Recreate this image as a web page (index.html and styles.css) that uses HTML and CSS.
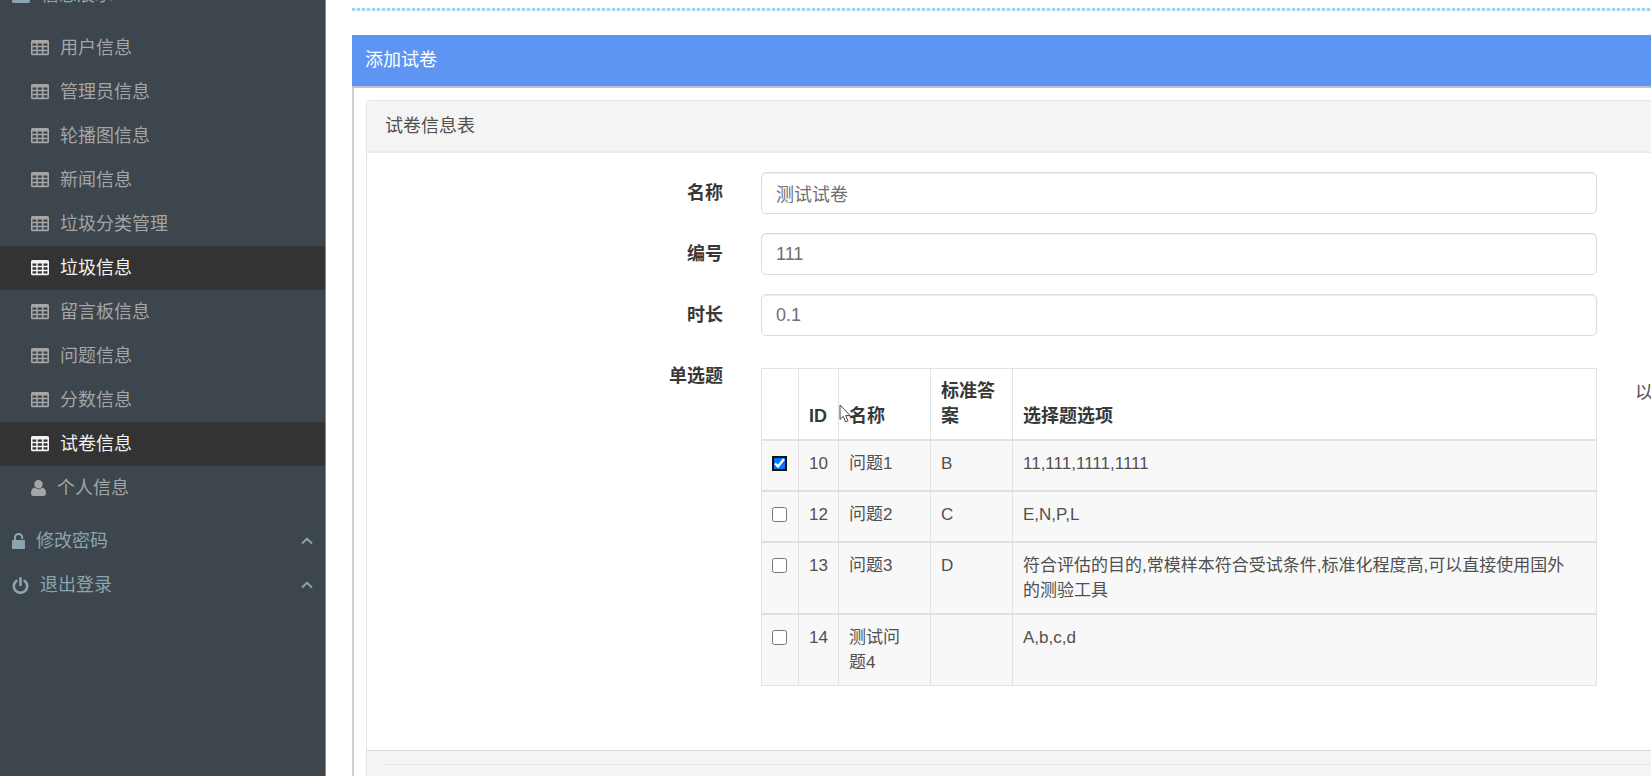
FILE: index.html
```html
<!DOCTYPE html>
<html lang="zh-CN">
<head>
<meta charset="utf-8">
<title>添加试卷</title>
<link rel="stylesheet" href="styles.css">
</head>
<body>
<svg class="sprite" aria-hidden="true">
  <symbol id="i-list" viewBox="0 0 18 16"><path fill="currentColor" fill-rule="evenodd" d="M1.500 0h15A1.500 1.500 0 0 1 18 1.500v13a1.500 1.500 0 0 1-1.500 1.500h-15A1.500 1.500 0 0 1 0 14.500v-13A1.500 1.500 0 0 1 1.500 0zM8 4v8h2V4z"/></symbol>
  <symbol id="i-table" viewBox="0 0 18 16"><path fill="currentColor" fill-rule="evenodd" d="M1.500 0h15A1.500 1.500 0 0 1 18 1.500v12.200a1.500 1.500 0 0 1-1.500 1.500h-15A1.500 1.500 0 0 1 0 13.700V1.500A1.500 1.500 0 0 1 1.500 0zM1.500 3.400v2.400h3.700V3.400zm5.200 0v2.400h4.200V3.400zm5.800 0v2.400h4V3.400zM1.500 7.300v2.400h3.700V7.300zm5.200 0v2.400h4.200V7.300zm5.800 0v2.400h4V7.300zM1.500 11.200v2.400h3.700v-2.400zm5.200 0v2.400h4.200v-2.400zm5.800 0v2.400h4v-2.400z"/></symbol>
  <symbol id="i-user" viewBox="0 0 15 16"><path fill="currentColor" d="M7.500 0a4.200 4.200 0 1 1 0 8.400 4.200 4.200 0 0 1 0-8.400zM3.700 7.600a5.400 5.400 0 0 0 7.600 0C14 8 15 10.500 15 13.200c0 1.700-1.100 2.800-2.600 2.800H2.600C1.100 16 0 14.900 0 13.200 0 10.500 1 8 3.700 7.600z"/></symbol>
  <symbol id="i-lock" viewBox="0 0 13 16"><path fill="none" stroke="currentColor" stroke-width="2" d="M3 8V4.500a3.600 3.600 0 0 1 7.200 0V6"/><rect fill="currentColor" y="7" width="13" height="9" rx="1"/></symbol>
  <symbol id="i-power" viewBox="0 0 17 17"><path fill="none" stroke="currentColor" stroke-width="2.600" stroke-linecap="round" d="M4.300 3.900a6.700 6.700 0 1 0 8.400 0M8.500 1.300v6.700"/></symbol>
  <symbol id="i-up" viewBox="0 0 12 8"><path fill="none" stroke="currentColor" stroke-width="2" d="M1 6.500 6 1.800l5 4.700"/></symbol>
</svg>
<div class="app">
  <nav class="sidebar">
    <a class="group group-open" href="#"><svg class="ic-table"><use href="#i-list"/></svg>信息展示</a>
    <div class="submenu">
      <a class="item" href="#"><svg class="ic-table"><use href="#i-table"/></svg>用户信息</a>
      <a class="item" href="#"><svg class="ic-table"><use href="#i-table"/></svg>管理员信息</a>
      <a class="item" href="#"><svg class="ic-table"><use href="#i-table"/></svg>轮播图信息</a>
      <a class="item" href="#"><svg class="ic-table"><use href="#i-table"/></svg>新闻信息</a>
      <a class="item" href="#"><svg class="ic-table"><use href="#i-table"/></svg>垃圾分类管理</a>
      <a class="item active" href="#"><svg class="ic-table"><use href="#i-table"/></svg>垃圾信息</a>
      <a class="item" href="#"><svg class="ic-table"><use href="#i-table"/></svg>留言板信息</a>
      <a class="item" href="#"><svg class="ic-table"><use href="#i-table"/></svg>问题信息</a>
      <a class="item" href="#"><svg class="ic-table"><use href="#i-table"/></svg>分数信息</a>
      <a class="item active" href="#"><svg class="ic-table"><use href="#i-table"/></svg>试卷信息</a>
      <a class="item" href="#"><svg class="ic-user"><use href="#i-user"/></svg>个人信息</a>
    </div>
    <a class="group" href="#"><svg class="ic-lock"><use href="#i-lock"/></svg>修改密码<svg class="ic-up"><use href="#i-up"/></svg></a>
    <a class="group" href="#"><svg class="ic-power"><use href="#i-power"/></svg>退出登录<svg class="ic-up"><use href="#i-up"/></svg></a>
  </nav>
  <main class="main">
    <div class="divider"></div>
    <section class="panel">
      <h1 class="panel-title">添加试卷</h1>
      <div class="panel-body">
      <form class="card">
        <h2 class="card-title">试卷信息表</h2>
        <div class="card-body">
          <div class="row"><label class="label" for="name">名称</label><input class="control" id="name" type="text" value="测试试卷"></div>
          <div class="row"><label class="label" for="code">编号</label><input class="control" id="code" type="text" value="111"></div>
          <div class="row"><label class="label" for="time">时长</label><input class="control" id="time" type="text" value="0.1"></div>
          <div class="row">
            <span class="label">单选题</span>
            <table class="table" aria-label="单选题">
              <colgroup><col class="c-check"><col class="c-id"><col class="c-name"><col class="c-answer"><col></colgroup>
              <thead>
                <tr><th></th><th>ID</th><th class="pointed">名称<svg class="cursor" viewBox="0 0 12 19"><path fill="#fff" stroke="#444" d="M1 1v14.500l3.300-3.100 2.300 5.400 2.400-1-2.300-5.200h4.500z"/></svg></th><th>标准答案</th><th>选择题选项</th></tr>
              </thead>
              <tbody>
                <tr><td><input class="check" type="checkbox" aria-label="问题1" checked></td><td>10</td><td>问题1</td><td>B</td><td>11,111,1111,1111</td></tr>
                <tr><td><input class="check" type="checkbox" aria-label="问题2"></td><td>12</td><td>问题2</td><td>C</td><td>E,N,P,L</td></tr>
                <tr><td><input class="check" type="checkbox" aria-label="问题3"></td><td>13</td><td>问题3</td><td>D</td><td>符合评估的目的,常模样本符合受试条件,标准化程度高,可以直接使用国外<br>的测验工具</td></tr>
                <tr><td><input class="check" type="checkbox" aria-label="测试问题4"></td><td>14</td><td>测试问<br>题4</td><td></td><td>A,b,c,d</td></tr>
              </tbody>
            </table>
            <span class="help">以</span>
          </div>
        </div>
        <div class="card-footer"><hr class="rule"></div>
      </form>
      </div>
    </section>
  </main>
</div>
</body>
</html>
```
FILE: styles.css
```css
* { box-sizing: border-box; }
body {
  margin: 0;
  font: 18px/25px "Liberation Sans", "Noto Sans CJK SC", sans-serif;
  color: #505050;
  background: #fff;
}
.sprite { position: absolute; width: 0; height: 0; }
.app {
  display: grid;
  grid-template-columns: 326px minmax(0, 1fr);
  height: 100vh;
  overflow: hidden;
}

.sidebar { background: #3c464c; border-right: 1px solid #888; }
.sidebar a {
  display: flex;
  align-items: center;
  gap: 11px;
  height: 44px;
  text-decoration: none;
}
.sidebar .group { padding: 0 12px; color: #8ba5b0; }
.sidebar .group-open { margin-top: -27px; }
.submenu { padding: 9px 0; }
.sidebar .item { padding: 0 31px; color: #a3a5a6; }
.sidebar .active { background: #333; color: #f2f2f2; }
.ic-table { width: 18px; height: 16px; }
.ic-user { width: 15px; height: 16px; }
.ic-lock { width: 13px; height: 16px; }
.ic-power { width: 17px; height: 17px; }
.ic-up { width: 12px; height: 8px; margin-left: auto; }

.main { padding: 8px 0 0 26px; }
.divider {
  height: 3px;
  margin-bottom: 24px;
  background: repeating-linear-gradient(90deg, #9dd3f2 0 3px, #e8f6fd 3px 5px);
}
.panel-title {
  margin: 0;
  padding: 13px 13px;
  color: #fff;
  background: #5e95f2;
  border-bottom: 2px solid #c0c4cc;
  font-size: 18px;
  font-weight: 400;
}
.panel-body {
  padding: 12px 0 0 12px;
  border-left: 2px solid #d0d0d0;
}
.card {
  border: solid #e6e6e6;
  border-width: 1px 0 0 1px;
  border-radius: 5px 0 0 0;
  overflow: hidden;
}
.card-title {
  margin: 0;
  padding: 13px 18px 12px;
  background: #f4f4f4;
  border-bottom: 2px solid #ebebeb;
  font-size: 18px;
  font-weight: 400;
}
.card-body {
  display: grid;
  gap: 19px;
  padding: 19px 0 64px 18px;
}
.row {
  display: grid;
  grid-template-columns: minmax(0, 338fr) minmax(0, 836fr) minmax(0, 16fr);
  column-gap: 38px;
  align-items: start;
}
.label { padding: 9px 0 7px; text-align: right; font-weight: 700; color: #383838; }
.control {
  width: 100%;
  height: 42px;
  padding: 0 14px;
  border: 1px solid #d9dcde;
  border-radius: 5px;
  box-shadow: inset 0 1px 1px #eee;
  font: inherit;
  color: #707070;
  background: #fff;
}
.help { padding-top: 26px; white-space: nowrap; }

.table {
  width: 100%;
  margin-top: 13px;
  table-layout: fixed;
  border-collapse: collapse;
}
.c-check { width: 37px; }
.c-id { width: 40px; }
.c-name { width: 92px; }
.c-answer { width: 82px; }
.table th, .table td {
  padding: 10px;
  border: 1px solid #e2e2e2;
  text-align: left;
  vertical-align: top;
}
.table th { vertical-align: bottom; color: #383838; border-bottom-width: 2px; }
.table td { height: 51px; font-size: 17px; background: #f8f8f8; border-top: 2px solid #dfdfdf; }
.table .pointed { position: relative; }
.cursor { position: absolute; left: 0; top: 35px; width: 12px; height: 19px; }
.check {
  display: block;
  width: 15px;
  height: 15px;
  margin: 5px 0 0;
}
.check:checked { outline: 2px solid #111; outline-offset: -2px; border-radius: 3px; }

.card-footer {
  min-height: 60px;
  padding: 13px 0 0 18px;
  background: #f4f4f4;
  border-top: 1px solid #d9d9d9;
}
.rule { margin: 0; border: 0; border-top: 1px solid #e6e6e6; }
```
